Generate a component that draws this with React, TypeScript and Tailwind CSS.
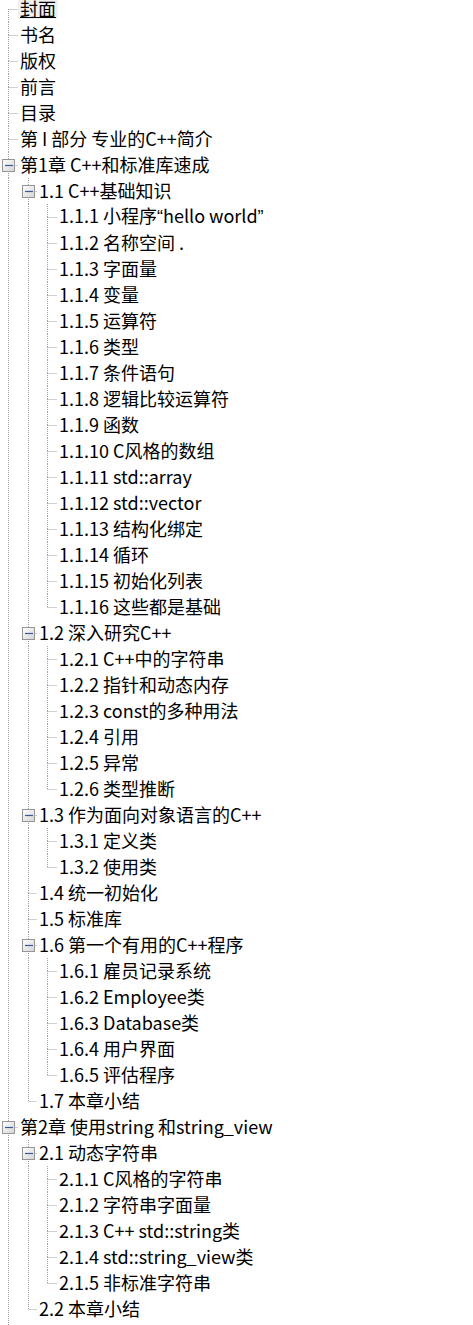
import React from 'react'

type Node = {
  label: string
  children?: Node[]
}

const toc: Node[] = [
  { label: '封面' },
  { label: '书名' },
  { label: '版权' },
  { label: '前言' },
  { label: '目录' },
  { label: '第 I 部分 专业的C++简介' },
  {
    label: '第1章 C++和标准库速成',
    children: [
      {
        label: '1.1 C++基础知识',
        children: [
          { label: '1.1.1 小程序“hello world”' },
          { label: '1.1.2 名称空间 .' },
          { label: '1.1.3 字面量' },
          { label: '1.1.4 变量' },
          { label: '1.1.5 运算符' },
          { label: '1.1.6 类型' },
          { label: '1.1.7 条件语句' },
          { label: '1.1.8 逻辑比较运算符' },
          { label: '1.1.9 函数' },
          { label: '1.1.10 C风格的数组' },
          { label: '1.1.11 std::array' },
          { label: '1.1.12 std::vector' },
          { label: '1.1.13 结构化绑定' },
          { label: '1.1.14 循环' },
          { label: '1.1.15 初始化列表' },
          { label: '1.1.16 这些都是基础' },
        ],
      },
      {
        label: '1.2 深入研究C++',
        children: [
          { label: '1.2.1 C++中的字符串' },
          { label: '1.2.2 指针和动态内存' },
          { label: '1.2.3 const的多种用法' },
          { label: '1.2.4 引用' },
          { label: '1.2.5 异常' },
          { label: '1.2.6 类型推断' },
        ],
      },
      {
        label: '1.3 作为面向对象语言的C++',
        children: [{ label: '1.3.1 定义类' }, { label: '1.3.2 使用类' }],
      },
      { label: '1.4 统一初始化' },
      { label: '1.5 标准库' },
      {
        label: '1.6 第一个有用的C++程序',
        children: [
          { label: '1.6.1 雇员记录系统' },
          { label: '1.6.2 Employee类' },
          { label: '1.6.3 Database类' },
          { label: '1.6.4 用户界面' },
          { label: '1.6.5 评估程序' },
        ],
      },
      { label: '1.7 本章小结' },
    ],
  },
  {
    label: '第2章 使用string 和string_view',
    children: [
      {
        label: '2.1 动态字符串',
        children: [
          { label: '2.1.1 C风格的字符串' },
          { label: '2.1.2 字符串字面量' },
          { label: '2.1.3 C++ std::string类' },
          { label: '2.1.4 std::string_view类' },
          { label: '2.1.5 非标准字符串' },
        ],
      },
      { label: '2.2 本章小结' },
    ],
  },
  // more chapters follow below the fold
  { label: '第3章 编码风格' },
]

type Row = {
  label: string
  depth: number
  // for each ancestor level: does a line continue through this row
  rails: boolean[]
  first: boolean
  last: boolean
  expanded: boolean
}

function flatten(nodes: Node[], depth: number, rails: boolean[], out: Row[]) {
  nodes.forEach((n, i) => {
    const last = i === nodes.length - 1
    const expanded = !!n.children?.length
    out.push({ label: n.label, depth, rails, first: depth === 0 && i === 0, last, expanded })
    if (n.children) flatten(n.children, depth + 1, [...rails, !last], out)
  })
  return out
}

const INDENT = 19.5
const ROW = 26
const MID = 13
const lineX = (d: number) => Math.round(8 + d * INDENT) + 0.5

function Guides({ row }: { row: Row }) {
  const w = Math.round((row.depth + 1) * INDENT) - 2
  const cx = lineX(row.depth)
  const dots = { stroke: '#a0a0a0', strokeWidth: 1, strokeDasharray: '1 1' }
  return (
    <svg width={w} height={ROW} className="shrink-0 block">
      <defs>
        <linearGradient id="box" x1="0" y1="0" x2="1" y2="1">
          <stop offset="0" stopColor="#ffffff" />
          <stop offset="1" stopColor="#d4d4d4" />
        </linearGradient>
      </defs>
      {row.rails.map((on, d) =>
        on ? <line key={d} x1={lineX(d)} y1={0} x2={lineX(d)} y2={ROW} {...dots} /> : null
      )}
      {!row.first && <line x1={cx} y1={0} x2={cx} y2={MID} {...dots} />}
      {!row.last && <line x1={cx} y1={MID} x2={cx} y2={ROW} {...dots} />}
      <line x1={cx} y1={MID + 0.5} x2={w} y2={MID + 0.5} {...dots} />
      {row.expanded && (
        <g>
          <rect x={cx - 6} y={MID - 5.5} width={12} height={12} fill="url(#box)" stroke="#969696" />
          <line x1={cx - 3.5} y1={MID + 0.5} x2={cx + 4.5} y2={MID + 0.5} stroke="#3a5a94" strokeWidth={1.2} />
        </g>
      )}
    </svg>
  )
}

// CJK fonts draw curly quotes full-width; the reference shows narrow ones
function Label({ text }: { text: string }) {
  const parts = text.split(/([“”])/)
  return (
    <>
      {parts.map((p, i) =>
        p === '“' || p === '”' ? (
          <span key={i} style={{ fontFamily: '"Liberation Sans", sans-serif' }}>
            {p}
          </span>
        ) : (
          p
        )
      )}
    </>
  )
}

export default function App() {
  const rows = flatten(toc, 0, [], [])
  return (
    <div className="w-[473px] h-[1325px] overflow-hidden bg-white">
      <ul
        className="-mt-[4px] text-[18px] text-black"
        style={{ fontFamily: '"Noto Sans CJK SC", "Liberation Sans", sans-serif' }}
      >
        {rows.map((row, i) => (
          <li key={i} className="flex items-center h-[26px] whitespace-nowrap">
            <Guides row={row} />
            <span
              className={`px-[2px] leading-[22px] -translate-y-[1px] ${
                i === 0 ? 'bg-[#f0f0f0] underline underline-offset-[1px]' : ''
              }`}
            >
              <Label text={row.label} />
            </span>
          </li>
        ))}
      </ul>
    </div>
  )
}
